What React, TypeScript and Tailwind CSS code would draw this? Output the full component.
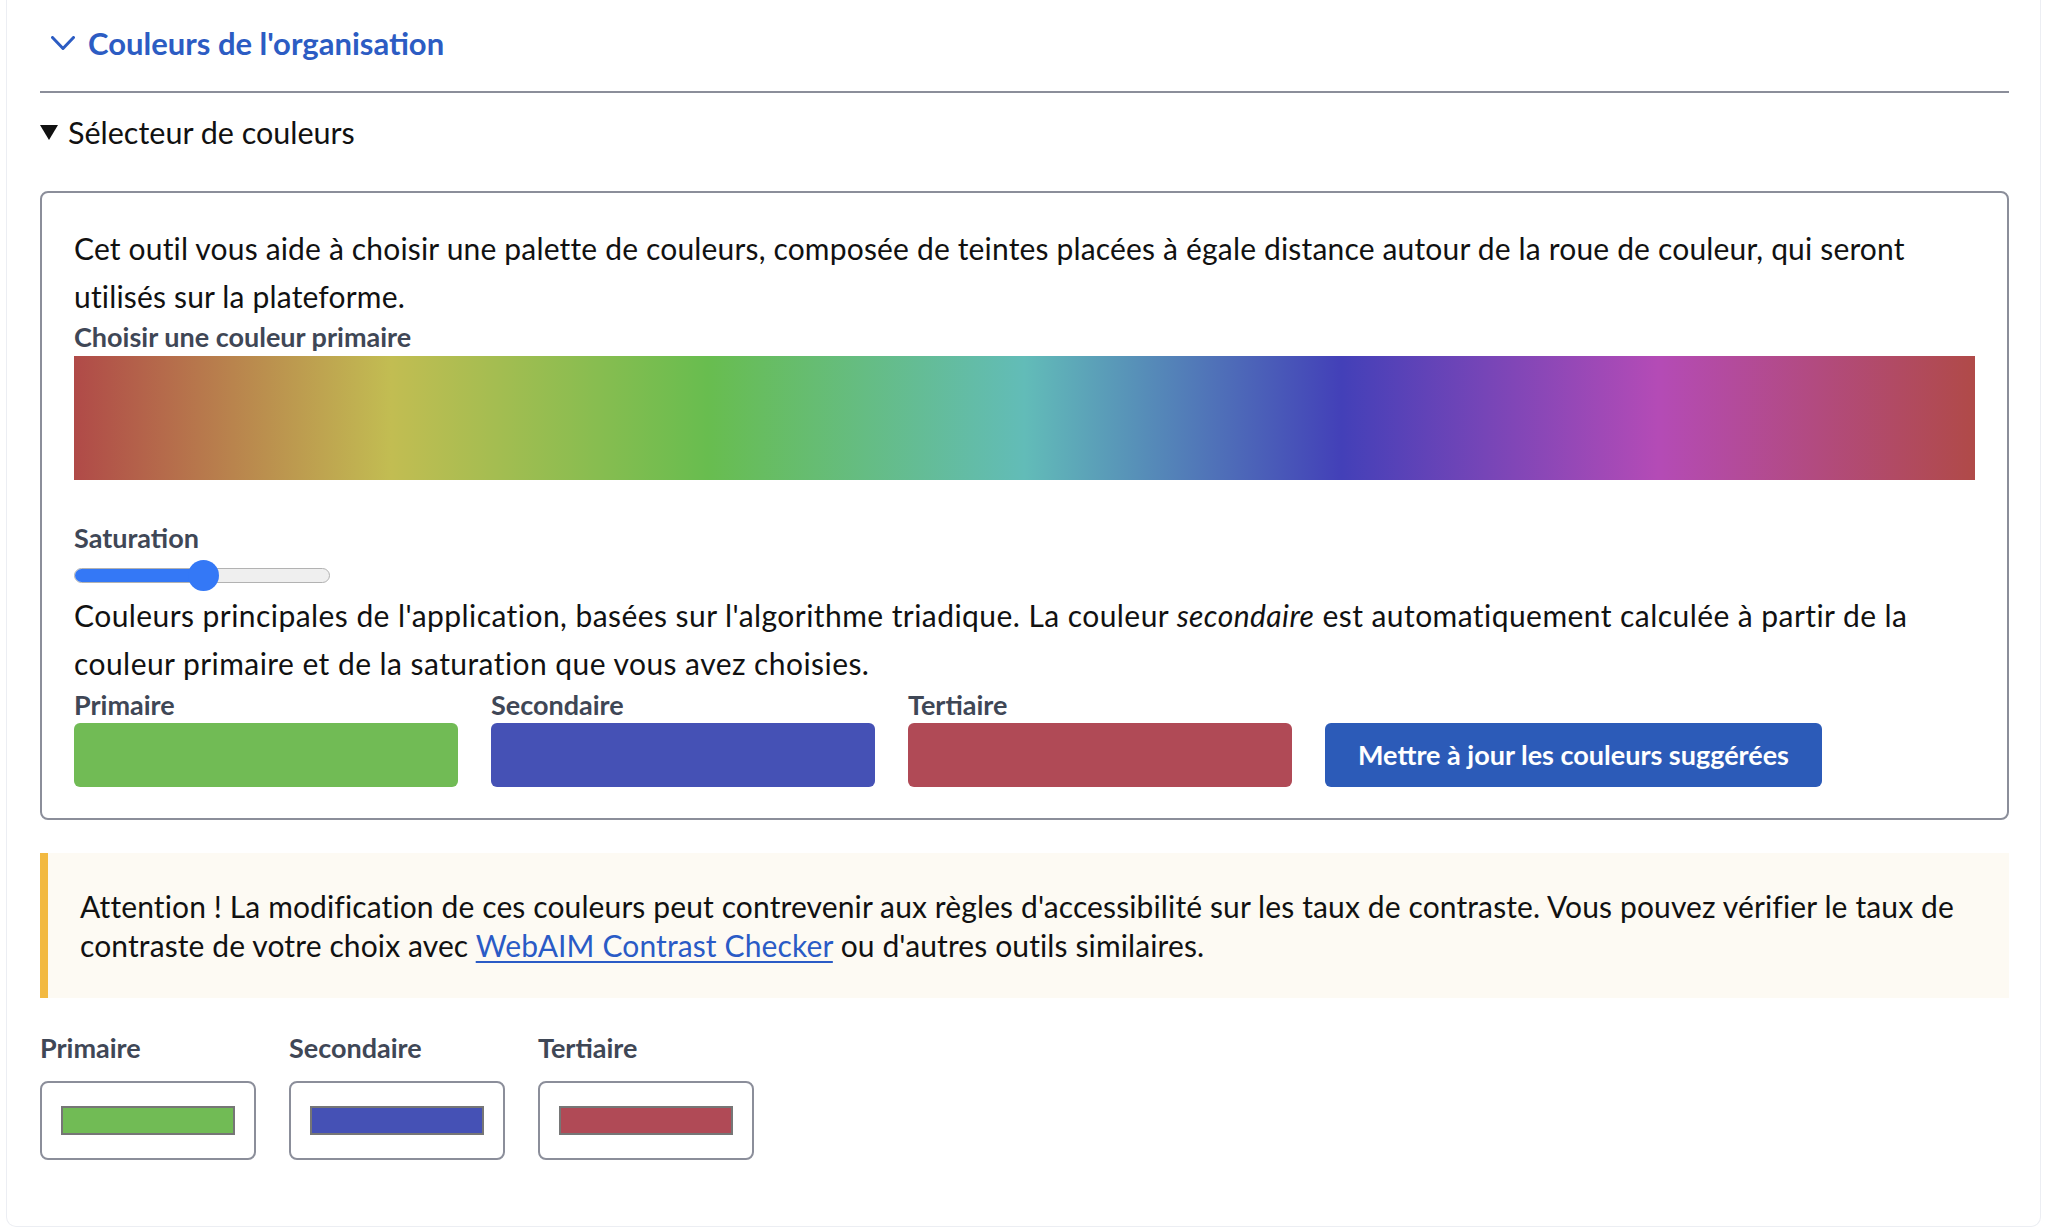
import React from 'react'

const label = 'text-[27px] leading-[30px] font-bold text-[#3f4756]'

const PaletteBox = ({ name, color }: { name: string; color: string }) => (
  <div className="flex flex-col">
    <span className={label}>{name}</span>
    <div className={`mt-[3px] h-[64px] w-[384px] rounded-[6px] ${color}`} />
  </div>
)

const ColorInput = ({ name, color }: { name: string; color: string }) => (
  <div className="flex flex-col">
    <span className={label}>{name}</span>
    <div className="mt-[18px] flex h-[79px] w-[216px] items-center justify-center rounded-[8px] border-2 border-[#8b8e9a] bg-white">
      <div className={`h-[29px] w-[174px] border-2 border-[#767676] ${color}`} />
    </div>
  </div>
)

export default function App() {
  return (
    <div className="min-h-[1232px] bg-white [font-family:Lato,'Open_Sans',sans-serif] text-[#111]">
      <div className="ml-[6px] w-[2035px] rounded-b-[10px] border-x border-b border-[#eceef3] pl-[33px] pr-[31px] pb-[66px]">
        {/* header */}
        <div className="flex items-center pt-[24px]">
          <svg width="24" height="15" viewBox="0 0 24 15" className="ml-[11px]" fill="none">
            <polyline points="1.5,1.5 12,12.5 22.5,1.5" stroke="#2c5cc3" strokeWidth="3" strokeLinecap="round" strokeLinejoin="round" />
          </svg>
          <h2 className="ml-[13px] text-[31px] leading-[38px] font-bold text-[#2c5cc3]">Couleurs de l'organisation</h2>
        </div>
        <div className="mt-[29px] h-[2px] bg-[#8b8e9a]" />

        {/* summary */}
        <div className="mt-[22px] flex items-center">
          <svg width="18" height="15" viewBox="0 0 18 15">
            <polygon points="0,0 18,0 9,15" fill="#111" />
          </svg>
          <span className="ml-[10px] text-[30.5px] leading-[35px]">Sélecteur de couleurs</span>
        </div>

        {/* picker card */}
        <div className="mt-[41px] rounded-[8px] border-2 border-[#8b8e9a] px-8 pt-[31px] pb-[31px]">
          <p className="whitespace-nowrap text-[30px] leading-[48px] tracking-[0.17px]">
            Cet outil vous aide à choisir une palette de couleurs, composée de teintes placées à égale distance autour de la roue de couleur, qui seront
            <br />
            utilisés sur la plateforme.
          </p>
          <div className={`mt-[2px] ${label}`}>Choisir une couleur primaire</div>
          <div className="mt-[4px] h-[124px] bg-[linear-gradient(to_right,#b04a48,#c2bd52,#68bd4f,#62bcb8,#4340b8,#b44bb6,#b04a48)]" />

          <div className={`mt-[43px] ${label}`}>Saturation</div>
          <div className="relative mt-[7px] flex h-[31px] w-[256px] items-center">
            <div className="flex h-[15px] w-full overflow-hidden rounded-full border border-[#b2b2b2] bg-[#efefef]">
              <div className="h-full w-[129px] bg-[#3478f6]" />
            </div>
            <div className="absolute left-[114px] top-0 h-[31px] w-[31px] rounded-full bg-[#3478f6]" />
          </div>

          <p className="whitespace-nowrap text-[30px] leading-[48px] tracking-[0.44px]">
            Couleurs principales de l'application, basées sur l'algorithme triadique. La couleur <em>secondaire</em> est automatiquement calculée à partir de la
            <br />
            couleur primaire et de la saturation que vous avez choisies.
          </p>

          <div className="mt-[3px] flex items-end gap-[33px]">
            <PaletteBox name="Primaire" color="bg-[#71bb55]" />
            <PaletteBox name="Secondaire" color="bg-[#4551b5]" />
            <PaletteBox name="Tertiaire" color="bg-[#b04a56]" />
            <button className="h-[64px] w-[497px] rounded-[6px] bg-[#2c5bb8] text-[27px] font-bold text-white">
              Mettre à jour les couleurs suggérées
            </button>
          </div>
        </div>

        {/* warning */}
        <div className="mt-[33px] border-l-[8px] border-[#f2b941] bg-[#fdfaf3] pl-[32px] pt-[34px] pb-[33px]">
          <p className="whitespace-nowrap text-[30px] leading-[39px] tracking-[0.12px]">
            Attention ! La modification de ces couleurs peut contrevenir aux règles d'accessibilité sur les taux de contraste. Vous pouvez vérifier le taux de
            <br />
            contraste de votre choix avec{' '}
            <a href="#" className="text-[#2a5bc6] underline decoration-2 underline-offset-4">WebAIM Contrast Checker</a> ou d'autres outils similaires.
          </p>
        </div>

        {/* current colors */}
        <div className="mt-[35px] flex gap-[33px]">
          <ColorInput name="Primaire" color="bg-[#71bb55]" />
          <ColorInput name="Secondaire" color="bg-[#4551b5]" />
          <ColorInput name="Tertiaire" color="bg-[#b04a56]" />
        </div>
      </div>
    </div>
  )
}
